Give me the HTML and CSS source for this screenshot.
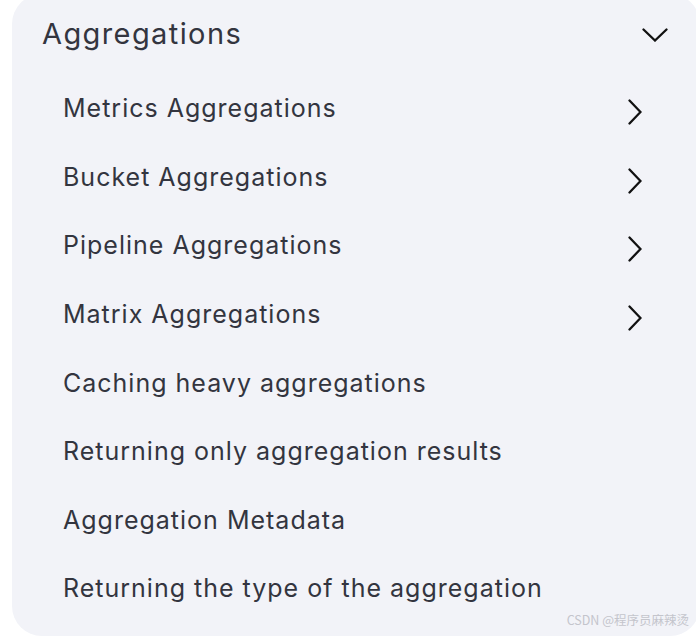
FILE: index.html
```html
<!DOCTYPE html>
<html lang="en">
<head>
    <meta charset="UTF-8">
    <title>Aggregations</title>
    <link rel="stylesheet" href="styles.css">
</head>
<body>
    <div class="nav-panel">
        <div class="nav-header">
            <span class="nav-title">Aggregations</span>
            <svg class="chevron-down" width="26" height="14" viewBox="0 0 26 14">
                <polyline points="1.5,1.5 13,12.5 24.5,1.5" />
            </svg>
        </div>
        <ul class="nav-list">
            <li class="nav-item">
                <span>Metrics Aggregations</span>
                <svg class="chevron-right" width="14" height="26" viewBox="0 0 14 26">
                    <polyline points="1.5,1.5 12.5,13 1.5,24.5" />
                </svg>
            </li>
            <li class="nav-item">
                <span>Bucket Aggregations</span>
                <svg class="chevron-right" width="14" height="26" viewBox="0 0 14 26">
                    <polyline points="1.5,1.5 12.5,13 1.5,24.5" />
                </svg>
            </li>
            <li class="nav-item">
                <span>Pipeline Aggregations</span>
                <svg class="chevron-right" width="14" height="26" viewBox="0 0 14 26">
                    <polyline points="1.5,1.5 12.5,13 1.5,24.5" />
                </svg>
            </li>
            <li class="nav-item">
                <span>Matrix Aggregations</span>
                <svg class="chevron-right" width="14" height="26" viewBox="0 0 14 26">
                    <polyline points="1.5,1.5 12.5,13 1.5,24.5" />
                </svg>
            </li>
            <li class="nav-item"><span>Caching heavy aggregations</span></li>
            <li class="nav-item"><span>Returning only aggregation results</span></li>
            <li class="nav-item"><span>Aggregation Metadata</span></li>
            <li class="nav-item"><span>Returning the type of the aggregation</span></li>
        </ul>
    </div>

    <div class="watermark">CSDN @程序员麻辣烫</div>
</body>
</html>
```

FILE: styles.css
```css
body {
    margin: 0;
    background-color: #ffffff;
    font-family: Inter, "Noto Sans", sans-serif;
    color: #33353f;
    overflow: hidden;
}
.nav-panel {
    width: 688px;
    margin: -6px 0 0 12px;
    padding-bottom: 13px;
    background-color: #f2f3f8;
    border-radius: 30px;
}
.nav-header {
    height: 80px;
    display: flex;
    align-items: center;
    justify-content: space-between;
    padding: 0 32px 0 30px;
}
.nav-title {
    font-size: 29px;
    line-height: 34px;
    letter-spacing: 1.4px;
}
.chevron-down polyline,
.chevron-right polyline {
    fill: none;
    stroke: #111111;
    stroke-width: 2.3;
    stroke-linecap: round;
    stroke-linejoin: miter;
}
.chevron-down {
    margin-top: 2px;
}
.nav-list {
    list-style: none;
    margin: 0;
    padding: 0;
}
.nav-item {
    height: 68.6px;
    display: flex;
    align-items: center;
    justify-content: space-between;
    padding: 0 58px 0 51px;
    font-size: 25px;
    line-height: 30px;
    letter-spacing: 1px;
}
.chevron-right {
    margin-top: 8px;
}
.watermark {
    position: absolute;
    right: 7px;
    bottom: 7px;
    font-family: "Noto Sans CJK SC", "Noto Sans", sans-serif;
    font-size: 12.5px;
    color: #c4c5cc;
}
```
